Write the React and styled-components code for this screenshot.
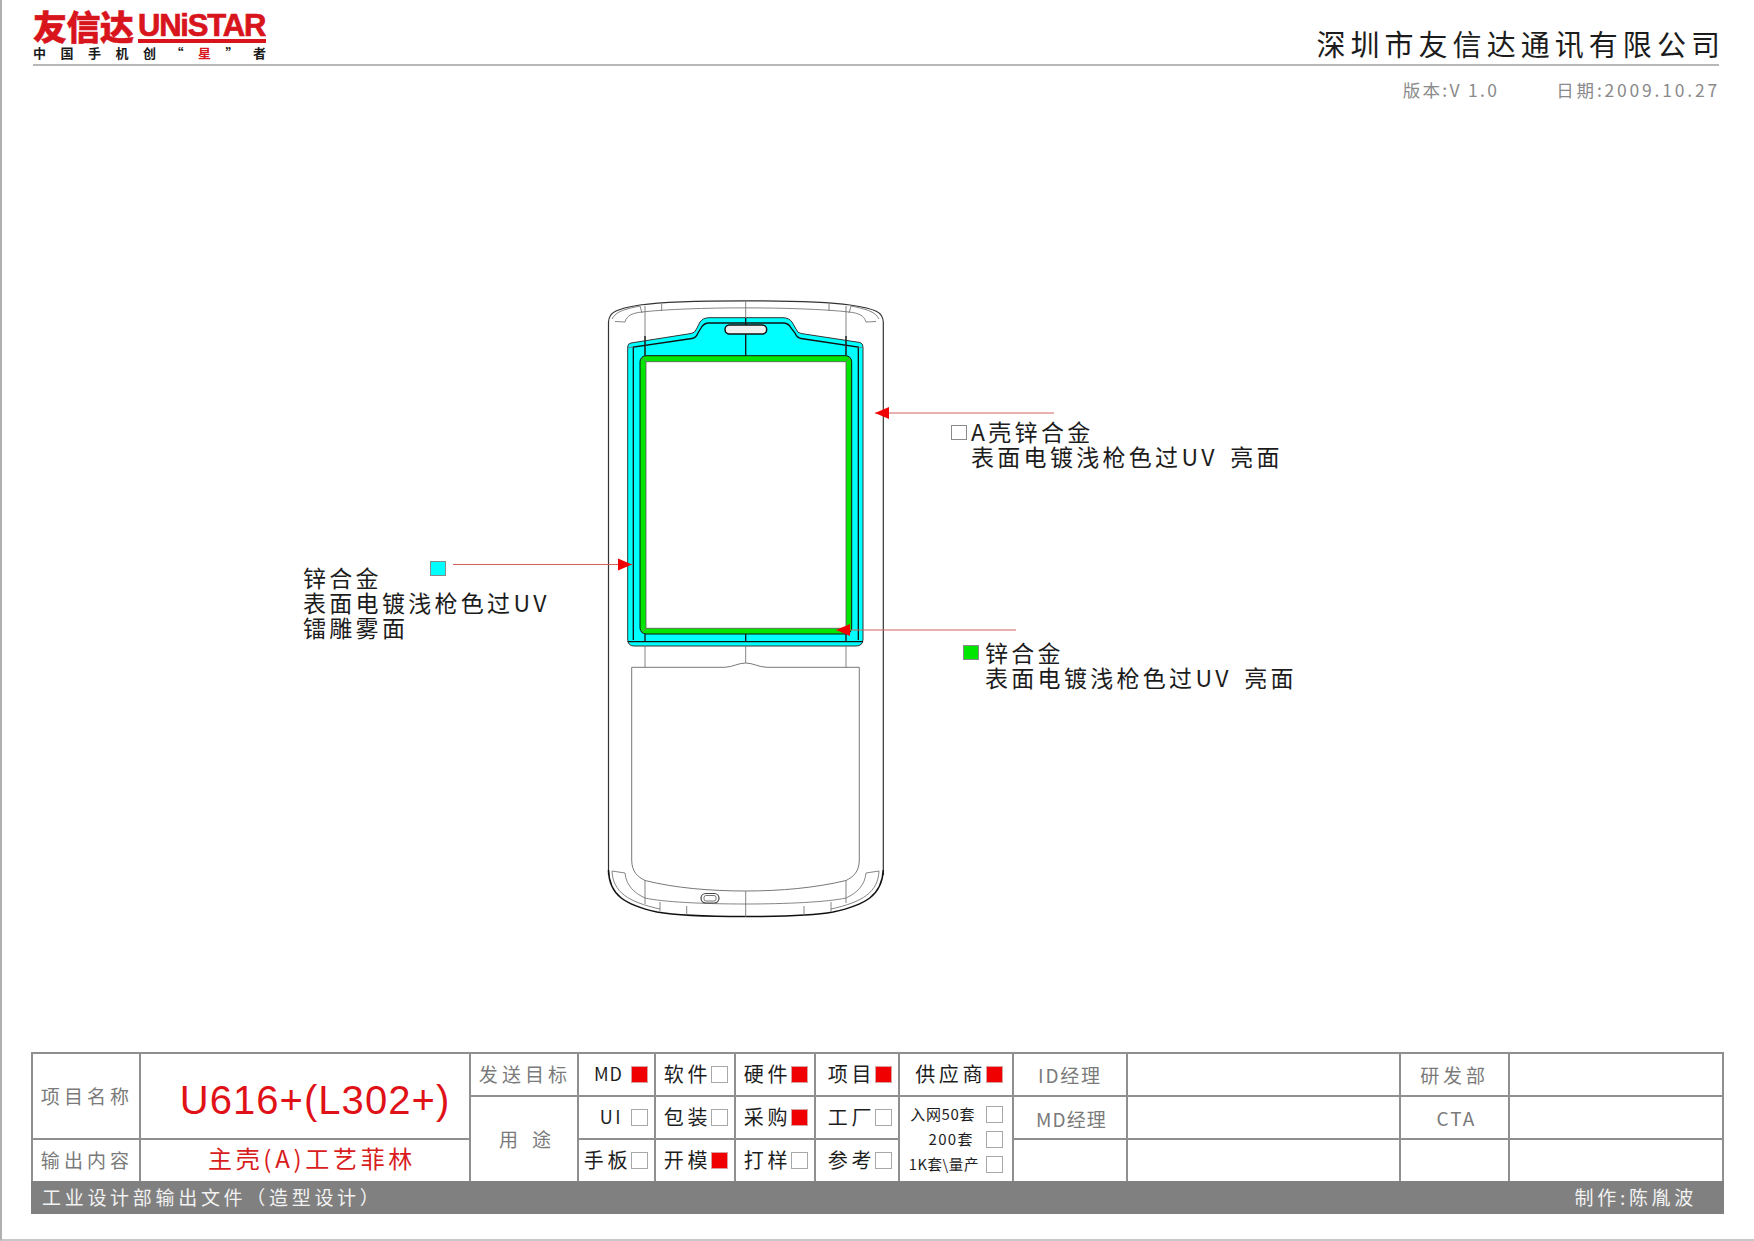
import React from 'react';
import styled, { createGlobalStyle } from 'styled-components';

const CJK = `"Noto Sans CJK SC", "Liberation Sans", sans-serif`;
const LATIN = `"Liberation Sans", "Noto Sans CJK SC", sans-serif`;

const Global = createGlobalStyle`
    html, body { margin: 0; padding: 0; background: #fff; }
    body { font-family: ${CJK}; }
`;

const Page = styled.div`
    width: 1754px;
    height: 1241px;
    box-sizing: border-box;
    border-left: 2px solid #b0b0b0;
    border-bottom: 2px solid #c8c8c8;
    display: flex;
    flex-direction: column;
    overflow: hidden;
`;

const TopRow = styled.header`
    height: 66px;
    box-sizing: border-box;
    margin: 0 35px 0 31px;
    border-bottom: 2px solid #b8b8b8;
    display: flex;
    justify-content: space-between;
    align-items: flex-end;
`;

const Logo = styled.div`
    width: 233px;
    margin-bottom: 4px;
`;

const LogoTop = styled.div`
    display: flex;
    align-items: flex-end;
    height: 34px;
    color: #d8141c;
`;

const LogoCn = styled.span`
    font-size: 34px;
    line-height: 34px;
    font-weight: 900;
    letter-spacing: -0.5px;
    width: 105px;
    white-space: nowrap;
    -webkit-text-stroke: 0.5px #d8141c;
`;

const LogoEn = styled.span`
    font-family: ${LATIN};
    font-weight: 700;
    font-size: 31px;
    line-height: 27px;
    letter-spacing: -1.2px;
    flex: 1;
    border-bottom: 4px solid #d8141c;
    white-space: nowrap;
    -webkit-text-stroke: 0.7px #d8141c;
`;

const Slogan = styled.div`
    display: flex;
    justify-content: space-between;
    margin-top: 3px;
    font-size: 13px;
    line-height: 14px;
    font-weight: 700;
    color: #1a1a1a;
`;

const SloganStar = styled.span`
    color: #d8141c;
`;

const Company = styled.h1`
    margin: 0 -6px 6px 0;
    font-size: 29px;
    line-height: 30px;
    font-weight: 400;
    letter-spacing: 5.05px;
    color: #1c1c1c;
    white-space: nowrap;
`;

const MetaRow = styled.div`
    height: 38px;
    box-sizing: border-box;
    padding-top: 9px;
    margin-right: 34px;
    display: flex;
    justify-content: flex-end;
    align-items: center;
    gap: 57px;
    font-size: 17.5px;
    color: #8a8a8a;
    letter-spacing: 2.8px;
`;

const Version = styled.span`
    letter-spacing: 2.3px;
`;

const Canvas = styled.main`
    position: relative;
    flex: 1;
`;

const Diagram = styled.svg`
    position: absolute;
    left: -2px;
    top: 0;
`;

const Note = styled.div`
    position: absolute;
    left: ${p => p.$x}px;
    top: ${p => p.$y}px;
    font-size: 23px;
    line-height: 25px;
    letter-spacing: 3.3px;
    word-spacing: 4px;
    color: #1c1c1c;
    white-space: nowrap;
`;

const Swatch = styled.span`
    position: absolute;
    left: ${p => p.$x}px;
    top: ${p => p.$y}px;
    width: 16px;
    height: 15px;
    box-sizing: border-box;
    border: 1px solid #8a8a8a;
    background: ${p => p.$color};
`;

const Sheet = styled.section`
    margin: 0 0 25px 29px;
    width: 1693px;
`;

const Grid = styled.div`
    display: grid;
    grid-template-columns: 106px 328px 106px 75px 78px 78px 82px 112px 112px 271px 107px 212px;
    grid-template-rows: 41px 41px 41px;
    gap: 2px;
    padding: 2px 2px 0;
    background: #8f8f8f;
`;

const Cell = styled.div`
    background: #fff;
    display: flex;
    align-items: center;
    justify-content: center;
    box-sizing: border-box;
    min-width: 0;
    white-space: nowrap;
    grid-row: ${p => p.$rows || 'auto'};
    grid-column: ${p => p.$col || 'auto'};
`;

const Label = styled(Cell)`
    color: #7a7a7a;
    font-size: 19px;
    letter-spacing: ${p => p.$wide || 4.1}px;
    padding: ${p => p.$pad || '0 0 2px 2px'};
`;

const ProjectName = styled(Cell)`
    font-family: ${LATIN};
    color: #e01218;
    font-size: 40px;
    letter-spacing: 1.05px;
    padding: 8px 0 0 20px;
`;

const Output = styled(Cell)`
    color: #d81c20;
    font-size: 24px;
    letter-spacing: 3.7px;
    padding: 0 0 7px 14px;
`;

const Target = styled(Cell)`
    justify-content: flex-end;
    padding: 0 ${p => p.$pad || 6}px 0 0;
    color: #1e1e1e;
    font-size: 20px;
    letter-spacing: 3.6px;
    gap: ${p => p.$gap || 0}px;
`;

const TargetName = styled.span`
    margin-top: -3px;
`;

const Latin = styled.span`
    letter-spacing: ${p => p.$wide}px;
    font-size: 18px;
    margin-top: -3px;
`;

const Box = styled.span`
    flex: none;
    width: 17px;
    height: 17px;
    box-sizing: border-box;
    border: 1.5px solid ${p => (p.$on ? '#d9a0a0' : '#a8a8a8')};
    background: ${p => (p.$on ? '#f00000' : '#fff')};
`;

const QtyList = styled(Cell)`
    flex-direction: column;
    justify-content: center;
    gap: 7px;
`;

const Qty = styled.div`
    width: 100%;
    height: 18px;
    box-sizing: border-box;
    padding-right: 9px;
    display: flex;
    justify-content: flex-end;
    align-items: center;
    gap: ${p => p.$gap}px;
    font-size: ${p => p.$size || 15}px;
    letter-spacing: ${p => p.$wide || 0.6}px;
    color: #1e1e1e;
`;

const QtyName = styled.span`
    margin-top: -2px;
`;

const Footer = styled.div`
    height: 33px;
    box-sizing: border-box;
    padding: 0 27px 2px 11px;
    background: #808080;
    color: #f2f2f2;
    font-size: 19px;
    letter-spacing: 3.7px;
    display: flex;
    justify-content: space-between;
    align-items: center;
`;

const outline = { fill: 'none', stroke: '#333', strokeWidth: 1.2 };
const thin = { fill: 'none', stroke: '#777', strokeWidth: 0.9 };
const dark = { fill: 'none', stroke: '#111', strokeWidth: 1.3 };

const Phone = () => (
    <g>
        {/* outer shell */}
        <path {...outline} d="M608.5 875 L608.5 322 C609 312 616 309 640 305 C680 299.5 810 299.5 850 305 C876 309 883 312 883.3 322 L883.3 875" />
        <path {...dark} strokeWidth={1.5} d="M608.5 870 C609 895 625 905 657 912 C690 918 800 918 833 912 C866 905 882 895 883.3 870" />
        <path {...thin} d="M612 871 C613 892 628 902 660 909" />
        <path {...thin} d="M879 871 C878 892 863 902 831 909" />

        {/* top corner details */}
        <path {...thin} d="M615 321.5 L625 322 C627 315 633 313 642 312 C690 306.5 800 306.5 849 312 C858 313 864 315 866 322 L876 321.5" />
        <path {...thin} d="M612 319 C616 311 626 309 640 306" />
        <path {...thin} d="M879 319 C875 311 865 309 851 306" />
        <path {...thin} d="M640 306 L642 313 M851 306 L849 313 M661.7 304 L661.7 311 M829 304 L829 311" />

        {/* cyan bezel */}
        <path fill="#00ffff" stroke="#333" strokeWidth="1" d="M627.7 347 Q627.7 343.5 631 343 L691 333.5 Q695 333 696.5 329 L700 322 Q703 317.8 709 317.7 L783 317.7 Q789 317.8 792 322 L796 329 Q797.5 333 801 333.5 L860 342.5 Q863 343.5 863 347 L863 639 Q863 646 856 646 L634 646 Q627.7 646 627.7 639 Z" />
        <path {...dark} d="M633.3 640 L633.3 347 L692 338.5 Q696 338 698 333 L701 328 Q703.5 323.5 708 323 L784 323 Q789 323.5 791 328 L795 333 Q797 338 801 338.5 L858.3 347 L858.3 640 M627.7 641.7 L863 641.7" />
        <path {...thin} d="M627.7 348 L633.3 347 M858.3 347 L863 348" />

        {/* green window frame */}
        <rect x="640" y="355.7" width="211.7" height="278.3" rx="6" fill="#00e600" stroke="#111" strokeWidth="1" />
        <path fill="#fff" stroke="#555" strokeWidth="0.8" d="M646 361.7 L846 361.7 L846 628.3 L646 628.3 Z" />
        <path {...thin} d="M641 357 L646 361.7 M851 357 L846 361.7 M641 633 L646 628.3 M851 633 L846 628.3" />

        {/* earpiece */}
        <rect x="725" y="325" width="41.7" height="9" rx="4.5" fill="#f0f0f0" stroke="#111" strokeWidth="1.5" />

        {/* centre and side construction lines */}
        <path {...thin} d="M645 306 L645 355.7 M846 306 L846 355.7 M745.7 300 L745.7 318" />
        <path {...dark} d="M745.7 318 L745.7 325 M745.7 334 L745.7 355.7 M645 336 L645 355.7 M846 336 L846 355.7 M645 634 L645 641.7 M745.7 634 L745.7 641.7 M846 634 L846 641.7" />
        <path {...thin} d="M645 646 L645 667.3 M745.7 646 L745.7 663 M846 646 L846 667.3" />

        {/* keypad panel */}
        <path {...thin} strokeWidth={1} d="M631.7 667.3 L725 667.3 C733 667 738 663 745.7 663 C753 663 758 667 767 667.3 L859.3 667.3 L859.3 860 C859.3 872 853 877 846 880.5 C815 888 780 891 745.7 891 C710 891 675 888 645 880.5 C638 877 631.7 872 631.7 860 Z" />

        {/* bottom trim */}
        <path {...thin} d="M612 871 L625 873 C626 885 634 893 645 898 C680 906 810 906 846 898 C857 893 865 885 866 873 L879 871" />
        <path {...thin} d="M645 880.5 L645 904 M660 902 L660 911 M686.7 906 L686.7 915 M745.7 891 L745.7 917 M804 906 L804 915 M831 902 L831 911 M846 880.5 L846 903" />
        <rect x="701" y="893.5" width="18" height="9.5" rx="4.7" fill="none" stroke="#444" strokeWidth="1.2" />
        <rect x="704" y="895.5" width="12" height="5.5" rx="2" fill="none" stroke="#666" strokeWidth="0.9" />
    </g>
);

const Arrow = ({ from, tip, y }) => {
    const dir = from > tip ? 1 : -1;
    return (
        <g>
            <line x1={from} x2={tip} y1={y} y2={y} stroke="#d06060" strokeWidth="1" />
            <path fill="#f00000" d={`M${tip} ${y} L${tip + dir * 14} ${y - 6} L${tip + dir * 14} ${y + 6} Z`} />
        </g>
    );
};

const TARGETS = [['软件', false], ['硬件', true], ['项目', true]];
const USES = [['包装', false], ['采购', true], ['工厂', false]];
const SAMPLES = [['手板', false], ['开模', true], ['打样', false], ['参考', false]];

const TargetCell = ({ name, on, pad }) => (
    <Target $pad={pad}>
        <TargetName>{name}</TargetName>
        <Box $on={on} />
    </Target>
);

const App = () => (
    <Page>
        <Global />
        <TopRow>
            <Logo>
                <LogoTop>
                    <LogoCn>友信达</LogoCn>
                    <LogoEn>UNiSTAR</LogoEn>
                </LogoTop>
                <Slogan>
                    <span>中</span><span>国</span><span>手</span><span>机</span><span>创</span>
                    <span>“</span><SloganStar>星</SloganStar><span>”</span><span>者</span>
                </Slogan>
            </Logo>
            <Company>深圳市友信达通讯有限公司</Company>
        </TopRow>
        <MetaRow>
            <Version>版本:V 1.0</Version>
            <span>日期:2009.10.27</span>
        </MetaRow>

        <Canvas>
            <Diagram width="1754" height="948" viewBox="0 104 1754 948">
                <Phone />
                <Arrow from={1054} tip={875} y={413} />
                <Arrow from={453} tip={632} y={564.5} />
                <Arrow from={1016} tip={836} y={630} />
            </Diagram>
            <Swatch $x={949} $y={321} $color="#fff" />
            <Note $x={969} $y={315}>A壳锌合金<br />表面电镀浅枪色过UV 亮面</Note>
            <Swatch $x={428} $y={457} $color="#00ffff" />
            <Note $x={301} $y={461}>锌合金<br />表面电镀浅枪色过UV<br />镭雕雾面</Note>
            <Swatch $x={961} $y={541} $color="#00e600" />
            <Note $x={983} $y={536}>锌合金<br />表面电镀浅枪色过UV 亮面</Note>
        </Canvas>

        <Sheet>
            <Grid>
                <Label $rows="1 / 3">项目名称</Label>
                <ProjectName $rows="1 / 3">U616+(L302+)</ProjectName>
                <Label>发送目标</Label>
                <Target $gap={8}>
                    <Latin $wide={1}>MD</Latin>
                    <Box $on />
                </Target>
                {TARGETS.map(([n, on]) => <TargetCell key={n} name={n} on={on} />)}
                <TargetCell name="供应商" on pad={9} />
                <Label $wide={1.8} $pad="0">ID经理</Label>
                <Cell />
                <Label $wide={3.8} $pad="0">研发部</Label>
                <Cell />

                <Label $rows="2 / 4" $col="3" $wide={14} $pad="0 0 2px 16px">用途</Label>
                <Target $gap={8}>
                    <Latin $wide={2.5}>UI</Latin>
                    <Box />
                </Target>
                {USES.map(([n, on]) => <TargetCell key={n} name={n} on={on} />)}
                <QtyList $rows="2 / 4" $col="8">
                    <Qty $gap={11}><QtyName>入网50套</QtyName><Box /></Qty>
                    <Qty $gap={12} $wide={1.4}><QtyName>200套</QtyName><Box /></Qty>
                    <Qty $gap={7} $size={14.5}><QtyName>1K套\量产</QtyName><Box /></Qty>
                </QtyList>
                <Label $wide={1.1} $pad="1px 0 0 3px">MD经理</Label>
                <Cell />
                <Label $wide={2} $pad="0 0 0 4px">CTA</Label>
                <Cell />

                <Label $rows="3" $col="1">输出内容</Label>
                <Output $rows="3" $col="2">主壳(A)工艺菲林</Output>
                {SAMPLES.map(([n, on]) => <TargetCell key={n} name={n} on={on} />)}
                <Cell $rows="3" $col="9" />
                <Cell $rows="3" $col="10" />
                <Cell $rows="3" $col="11" />
                <Cell $rows="3" $col="12" />
            </Grid>
            <Footer>
                <span>工业设计部输出文件（造型设计）</span>
                <span>制作:陈胤波</span>
            </Footer>
        </Sheet>
    </Page>
);

export default App;
